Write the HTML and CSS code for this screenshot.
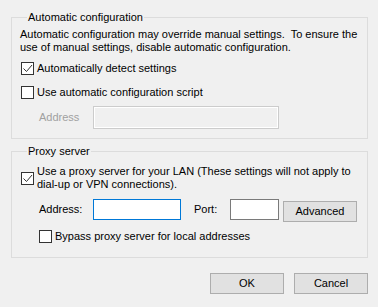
FILE: index.html
```html
<!DOCTYPE html>
<html>
<head>
<meta name="viewport" content="width=device-width, initial-scale=1">
<link rel="stylesheet" href="styles.css">
</head>
<body>

<fieldset class="group auto">
	<legend>Automatic configuration</legend>
	<p class="note">Automatic configuration may override manual settings.&nbsp; To ensure the<br>use of manual settings, disable automatic configuration.</p>
	<label class="check row-detect">
		<span class="box on"><svg width="11" height="11" viewBox="0 0 11 11"><path d="M1.5 5.5 L4.5 8.5 L10 2" fill="none" stroke="#333" stroke-width="1"/></svg></span>
		Automatically detect settings
	</label>
	<label class="check row-script">
		<span class="box"></span>
		Use automatic configuration script
	</label>
	<div class="field row-script-addr">
		<span class="field-label disabled">Address</span>
		<span class="input off wide"></span>
	</div>
</fieldset>

<fieldset class="group proxy">
	<legend>Proxy server</legend>
	<label class="check row-proxy">
		<span class="box on"><svg width="11" height="11" viewBox="0 0 11 11"><path d="M1.5 5.5 L4.5 8.5 L10 2" fill="none" stroke="#333" stroke-width="1"/></svg></span>
		<span>Use a proxy server for your LAN (These settings will not apply to<br>dial-up or VPN connections).</span>
	</label>
	<div class="field row-proxy-addr">
		<span class="field-label">Address:</span>
		<span class="input focus addr"></span>
		<span class="field-label port-label">Port:</span>
		<span class="input port"></span>
		<button class="btn adv">Advanced</button>
	</div>
	<label class="check row-bypass">
		<span class="box"></span>
		Bypass proxy server for local addresses
	</label>
</fieldset>

<div class="actions">
	<button class="btn">OK</button>
	<button class="btn">Cancel</button>
</div>

</body>
</html>
```

FILE: styles.css
```css
* {
  box-sizing: border-box;
}

body {
  margin: 0;
  padding: 0 10px 0 11px;
  background: #f0f0f0;
  font-family: "Liberation Sans", Arial, sans-serif;
  font-size: 11px;
  line-height: 13px;
  color: #000;
  white-space: nowrap;
}

/* Group boxes */
.group {
  margin: 10px 0 0 0;
  padding: 0 8px;
  border: 1px solid #dcdcdc;
  width: 357px;
  min-width: 0;
}

.group legend {
  margin-left: 7px;
  padding: 0 1px;
  line-height: 14px;
}

.auto {
  padding-bottom: 9px;
}

.proxy {
  margin-top: 5px;
  padding-bottom: 14px;
}

.note {
  margin: 4px 0 0 0;
}

/* Checkboxes */
.check {
  display: flex;
  align-items: center;
  gap: 3px;
  margin-left: 1px;
}

.box {
  width: 13px;
  height: 13px;
  border: 1px solid #333;
  background: #fff;
  flex: none;
  display: flex;
  align-items: center;
  justify-content: center;
}

.box svg {
  display: block;
}

.row-detect {
  margin-top: 8px;
}

.row-script {
  margin-top: 11px;
}

.row-proxy {
  margin-top: 7px;
}

.row-bypass {
  margin-top: 8px;
  margin-left: 19px;
}

/* Label + input rows */
.field {
  display: flex;
  align-items: center;
  margin-left: 19px;
}

.row-script-addr {
  margin-top: 7px;
}

.row-proxy-addr {
  margin-top: 8px;
  align-items: flex-start;
}

.field-label {
  width: 54px;
  flex: none;
}

.row-proxy-addr .field-label {
  line-height: 21px;
}

.port-label {
  width: 36px;
  margin-left: 13px;
}

.disabled {
  color: #a0a0a0;
}

.input {
  display: block;
  height: 21px;
  background: #fff;
  border: 1px solid #7a7a7a;
}

.input.off {
  height: 23px;
  background: #f0f0f0;
  border-color: #cccccc;
  box-shadow: inset 0 0 0 1px #fff;
}

.input.focus {
  border-color: #0078d7;
}

.wide {
  width: 186px;
}

.addr {
  width: 88px;
}

.port {
  width: 49px;
}

/* Buttons */
.btn {
  width: 74px;
  height: 21px;
  padding: 0;
  background: #e1e1e1;
  border: 1px solid #adadad;
  border-radius: 0;
  font: inherit;
  color: #000;
}

.adv {
  margin: 2px 0 0 4px;
}

.actions {
  display: flex;
  justify-content: flex-end;
  gap: 10px;
  margin-top: 15px;
}
```
